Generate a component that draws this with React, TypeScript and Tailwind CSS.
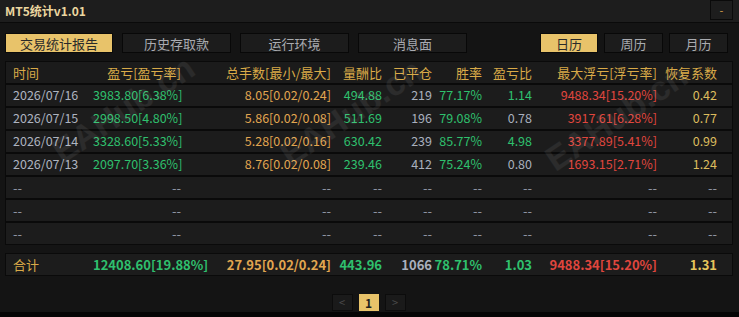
import React from 'react';

type Row = {
  date: string;
  pnl: string;
  lots: string;
  ratio: string;
  closed: string;
  win: string;
  pl: string;
  plGreen: boolean;
  dd: string;
  rec: string;
};

const rows: Row[] = [
  { date: '2026/07/16', pnl: '3983.80[6.38%]', lots: '8.05[0.02/0.24]', ratio: '494.88', closed: '219', win: '77.17%', pl: '1.14', plGreen: true, dd: '9488.34[15.20%]', rec: '0.42' },
  { date: '2026/07/15', pnl: '2998.50[4.80%]', lots: '5.86[0.02/0.08]', ratio: '511.69', closed: '196', win: '79.08%', pl: '0.78', plGreen: false, dd: '3917.61[6.28%]', rec: '0.77' },
  { date: '2026/07/14', pnl: '3328.60[5.33%]', lots: '5.28[0.02/0.16]', ratio: '630.42', closed: '239', win: '85.77%', pl: '4.98', plGreen: true, dd: '3377.89[5.41%]', rec: '0.99' },
  { date: '2026/07/13', pnl: '2097.70[3.36%]', lots: '8.76[0.02/0.08]', ratio: '239.46', closed: '412', win: '75.24%', pl: '0.80', plGreen: false, dd: '1693.15[2.71%]', rec: '1.24' },
];

const grid = 'grid grid-cols-[80px_88px_150px_51px_50px_50px_50px_125px_60px] items-center pl-[7px] h-[21px]';

const tabs = ['交易统计报告', '历史存取款', '运行环境', '消息面'];
const periods = ['日历', '周历', '月历'];

const EmptyRow = () => (
  <div className={`${grid} bg-[#1c1c1c] text-[#8f96a3]`}>
    <span>--</span>
    {Array.from({ length: 8 }).map((_, i) => (
      <span key={i} className="text-right">--</span>
    ))}
  </div>
);

export default function App() {
  return (
    <div className="relative w-[739px] h-[317px] overflow-hidden bg-[#050505] font-['Noto_Sans_CJK_SC',sans-serif] text-[13px] leading-none">
      {/* title bar */}
      <div className="flex items-start justify-between h-[23px] bg-[#1d1d1d] border-b border-[#0a0a0a]">
        <span className="pl-[5px] pt-[5px] text-[12px] font-bold text-[#ecd7a0]">MT5统计v1.01</span>
        <button className="mr-[6px] w-[23px] h-[20px] bg-[#1d1d1d] border border-[#0a0a0a] text-[#d6a04c] text-[11px] leading-none">-</button>
      </div>

      <div className="h-[289px] bg-[#141414] px-[5px] pt-[10px]">
        {/* tabs */}
        <div className="flex items-center h-[20px]">
          <div className="flex gap-[9px]">
            {tabs.map((t, i) => (
              <div
                key={t}
                className={
                  i === 0
                    ? 'w-[108px] h-[20px] flex items-center justify-center bg-[#e8c36a] border border-[#0a0a0a] text-[#2a2a2a]'
                    : 'w-[109px] h-[20px] flex items-center justify-center bg-[#1c1c1c] border border-[#080808] text-[#a9abb0]'
                }
              >
                {t}
              </div>
            ))}
          </div>
          <div className="ml-auto mr-[6px] flex gap-[6px]">
            {periods.map((p, i) => (
              <div
                key={p}
                className={
                  i === 0
                    ? 'w-[58px] h-[20px] flex items-center justify-center bg-[#e8c36a] border border-[#0a0a0a] text-[#2a2a2a]'
                    : 'w-[59px] h-[20px] flex items-center justify-center bg-[#1c1c1c] border border-[#080808] text-[#a9abb0]'
                }
              >
                {p}
              </div>
            ))}
          </div>
        </div>

        {/* table */}
        <div className="mt-[8px] mr-[1px] flex flex-col gap-[2px] bg-[#0a0a0a] p-[1px]">
          <div className={`${grid} bg-[#1b1b1b] text-[#d9aa48]`}>
            <span>时间</span>
            <span className="text-right">盈亏[盈亏率]</span>
            <span className="text-right">总手数[最小/最大]</span>
            <span className="text-right">量酬比</span>
            <span className="text-right">已平仓</span>
            <span className="text-right">胜率</span>
            <span className="text-right">盈亏比</span>
            <span className="text-right">最大浮亏[浮亏率]</span>
            <span className="text-right">恢复系数</span>
          </div>
          {rows.map((r) => (
            <div key={r.date} className={`${grid} bg-[#1c1c1c] text-[12.5px]`}>
              <span className="text-[#aeb4c0]">{r.date}</span>
              <span className="text-right text-[#2fc06e]">{r.pnl}</span>
              <span className="text-right text-[#e2a650]">{r.lots}</span>
              <span className="text-right text-[#2fc06e]">{r.ratio}</span>
              <span className="text-right text-[#a9b0be]">{r.closed}</span>
              <span className="text-right text-[#2fc06e]">{r.win}</span>
              <span className={`text-right ${r.plGreen ? 'text-[#2fc06e]' : 'text-[#a9b0be]'}`}>{r.pl}</span>
              <span className="text-right text-[#e0463e]">{r.dd}</span>
              <span className="text-right text-[#dcbd5e]">{r.rec}</span>
            </div>
          ))}
          <EmptyRow />
          <EmptyRow />
          <EmptyRow />
        </div>

        {/* total */}
        <div className="mt-[8px] mr-[1px] bg-[#0a0a0a] p-[1px]">
          <div className={`${grid} bg-[#1c1c1c] font-bold`}>
            <span className="font-normal text-[#d9aa48]">合计</span>
            <span className="text-right text-[#2fc06e]">12408.60[19.88%]</span>
            <span className="text-right text-[#e2a650]">27.95[0.02/0.24]</span>
            <span className="text-right text-[#2fc06e]">443.96</span>
            <span className="text-right text-[#a9b0be]">1066</span>
            <span className="text-right text-[#2fc06e]">78.71%</span>
            <span className="text-right text-[#2fc06e]">1.03</span>
            <span className="text-right text-[#e0463e]">9488.34[15.20%]</span>
            <span className="text-right text-[#e6c55c]">1.31</span>
          </div>
        </div>

        {/* pagination */}
        <div className="mt-[18px] flex justify-center gap-[6px] pr-[2px]">
          <div className="w-[21px] h-[17px] flex items-center justify-center bg-[#1a1a1a] border border-[#0c0c0c] text-[#4a4a4a] text-[11px]">&lt;</div>
          <div className="w-[20px] h-[17px] flex items-center justify-center bg-[#e8c36a] text-[#1e1e1e] text-[12px] font-bold">1</div>
          <div className="w-[21px] h-[17px] flex items-center justify-center bg-[#1a1a1a] border border-[#0c0c0c] text-[#4a4a4a] text-[11px]">&gt;</div>
        </div>
      </div>

      {/* watermarks */}
      {[{ l: 42, t: 92 }, { l: 270, t: 95 }, { l: 535, t: 100 }].map((w, i) => (
        <span
          key={i}
          className="pointer-events-none absolute -rotate-[34deg] font-['Liberation_Sans',sans-serif] font-bold text-[34px] text-white/[0.07] whitespace-nowrap"
          style={{ left: w.l, top: w.t }}
        >
          EAHub.cn
        </span>
      ))}
    </div>
  );
}
